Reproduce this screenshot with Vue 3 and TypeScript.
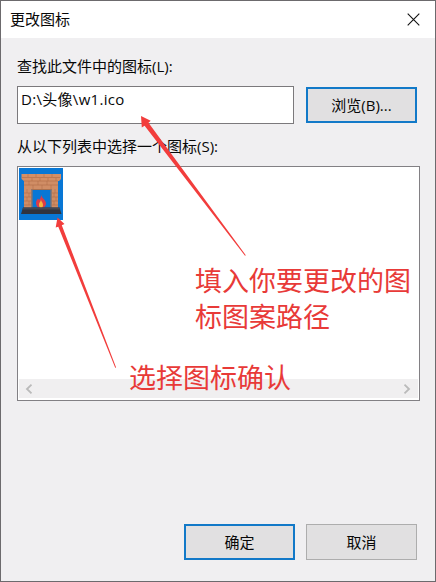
<script setup lang="ts">
import { ref } from 'vue'

const title = '更改图标'
const path = ref('D:\\头像\\w1.ico')
</script>

<template>
  <main class="dialog">
    <header class="titlebar">
      <span>{{ title }}</span>
      <svg class="close" width="13" height="13" viewBox="0 0 13 13">
        <path d="M.7.7l11.6 11.6M12.3.7L.7 12.3" fill="none" stroke="#111" stroke-width="1.1" />
      </svg>
    </header>

    <section class="content">
      <label class="caption">查找此文件中的图标(L):</label>
      <div class="path-row">
        <div class="path">{{ path }}</div>
        <button class="btn primary">浏览(B)...</button>
      </div>
      <label class="caption second">从以下列表中选择一个图标(S):</label>
      <div class="list">
        <div class="item">
          <svg width="44" height="52" viewBox="0 0 44 52">
            <path d="M5 13h34v27h-6.500V21h-20v19H5z" fill="#d08d65" />
            <path d="M2.500 6h39.500v5l-2 2H5l-2.500-2z" fill="#d58f65" />
            <path d="M3 9.500h38M5 13h34M5 17h34M5 25h7.500M5 29h7.500M5 33h7.500M5 37h7.500M32.500 25H39M32.500 29H39M32.500 33H39M32.500 37H39" stroke="#b4704a" stroke-width=".7" />
            <path d="M9 6v3M17 6v3M25 6v3M33 6v3M13 10v3M21 10v3M29 10v3M37 10v3M10 13v4M19 13v4M28 13v4M14 17v4M23 17v4M32 17v4M8 21v4M10 25v4M8 29v4M10 33v4M36 21v4M35 25v4M37 29v4M35 33v4" stroke="#b4704a" stroke-width=".6" />
            <path d="M12.500 21h20v19h-1V22h-18v18h-1z" fill="#a8704f" />
            <path d="M22 26c0 4 5 5.500 5 9.500 0 2.500-2 4.500-5 4.500s-5-2-5-5c0-2.500 1-3 2-4.500l1 1.500c2-2 2-3.500 2-6z" fill="#dc3c49" />
            <path d="M22 31c0 3 2 3 2 6 0 2-1 3-2 3s-2-1-2-3c0-3 2-3 2-6z" fill="#f6b63c" />
            <path d="M4 39.500h36.500l2 6.500H2z" fill="#30343f" />
            <path d="M4 39.500h36.500l.5 2H3.500z" fill="#454854" />
          </svg>
        </div>
        <div class="scrollbar">
          <svg width="8" height="10" viewBox="0 0 8 10"><path d="M6.500.7L2 5l4.500 4.300" /></svg>
          <svg width="8" height="10" viewBox="0 0 8 10"><path d="M1.500.7L6 5 1.500 9.300" /></svg>
        </div>
      </div>
      <footer class="actions">
        <button class="btn primary">确定</button>
        <button class="btn">取消</button>
      </footer>
    </section>

    <svg class="arrows" width="436" height="582" viewBox="0 0 436 582">
      <path d="M141 116l9.700 4.700-2.200 2.100L245.800 255.200l-.8.600L144.600 125.700l-2.800 1.800z" />
      <path d="M57.500 217.500l7 6.500-2.700 1.300L116.100 367.400l-.9.400L58.300 226.700l-2.600.8z" />
    </svg>
    <p class="note path-note">填入你要更改的图<br />标图案路径</p>
    <p class="note icon-note">选择图标确认</p>
  </main>
</template>

<style>
body {
  margin: 0;
}
</style>

<style scoped>
.dialog {
  position: relative;
  box-sizing: border-box;
  width: 436px;
  height: 582px;
  overflow: hidden;
  border: 1px solid #6c6a6d;
  background: #f0eff1;
  color: #080808;
  font: 15px/20px "Open Sans", "Noto Sans CJK SC", sans-serif;
}
.titlebar {
  display: flex;
  align-items: center;
  justify-content: space-between;
  box-sizing: border-box;
  height: 37px;
  padding: 0 15px 0 9px;
  background: #fff;
}
.titlebar span {
  padding-bottom: 2px;
}
.close {
  display: block;
}
.content {
  padding: 18px 15px 0 16px;
}
.caption {
  display: block;
  height: 20px;
  white-space: nowrap;
}
.path-row {
  display: flex;
  align-items: center;
  gap: 12px;
  margin-top: 10px;
}
.path {
  box-sizing: border-box;
  width: 277px;
  height: 38px;
  padding: 2px 3px;
  border: 1px solid #7b797c;
  background: #fff;
  letter-spacing: 0.3px;
}
.btn {
  box-sizing: border-box;
  width: 111px;
  height: 36px;
  padding: 0;
  border: 1px solid #adadad;
  border-radius: 0;
  background: #e1e0e1;
  color: inherit;
  font: inherit;
}
.primary {
  border: 2px solid #1279c8;
}
.second {
  margin-top: 12px;
}
.list {
  display: flex;
  flex-direction: column;
  justify-content: space-between;
  box-sizing: border-box;
  width: 403px;
  height: 235px;
  margin-top: 10px;
  padding: 1px 1px 2px;
  border: 1px solid #828084;
  background: #fff;
}
.item {
  width: 44px;
  height: 52px;
  background: #0877d5;
}
.item svg {
  display: block;
}
.scrollbar {
  display: flex;
  align-items: center;
  justify-content: space-between;
  height: 19px;
  padding: 0 7px 0 6px;
  background: #f0eff0;
}
.scrollbar path {
  fill: none;
  stroke: #bababa;
  stroke-width: 1.8;
}
.actions {
  display: flex;
  justify-content: flex-end;
  gap: 11px;
  margin: 123px 3px 0 0;
}
.arrows {
  position: absolute;
  top: -1px;
  left: -1px;
  fill: #f23d3c;
}
.note {
  position: absolute;
  margin: 0;
  color: #e83a38;
  font-size: 27px;
  line-height: 36px;
  white-space: nowrap;
}
.path-note {
  top: 262px;
  left: 194px;
}
.icon-note {
  top: 359px;
  left: 128px;
}
</style>
